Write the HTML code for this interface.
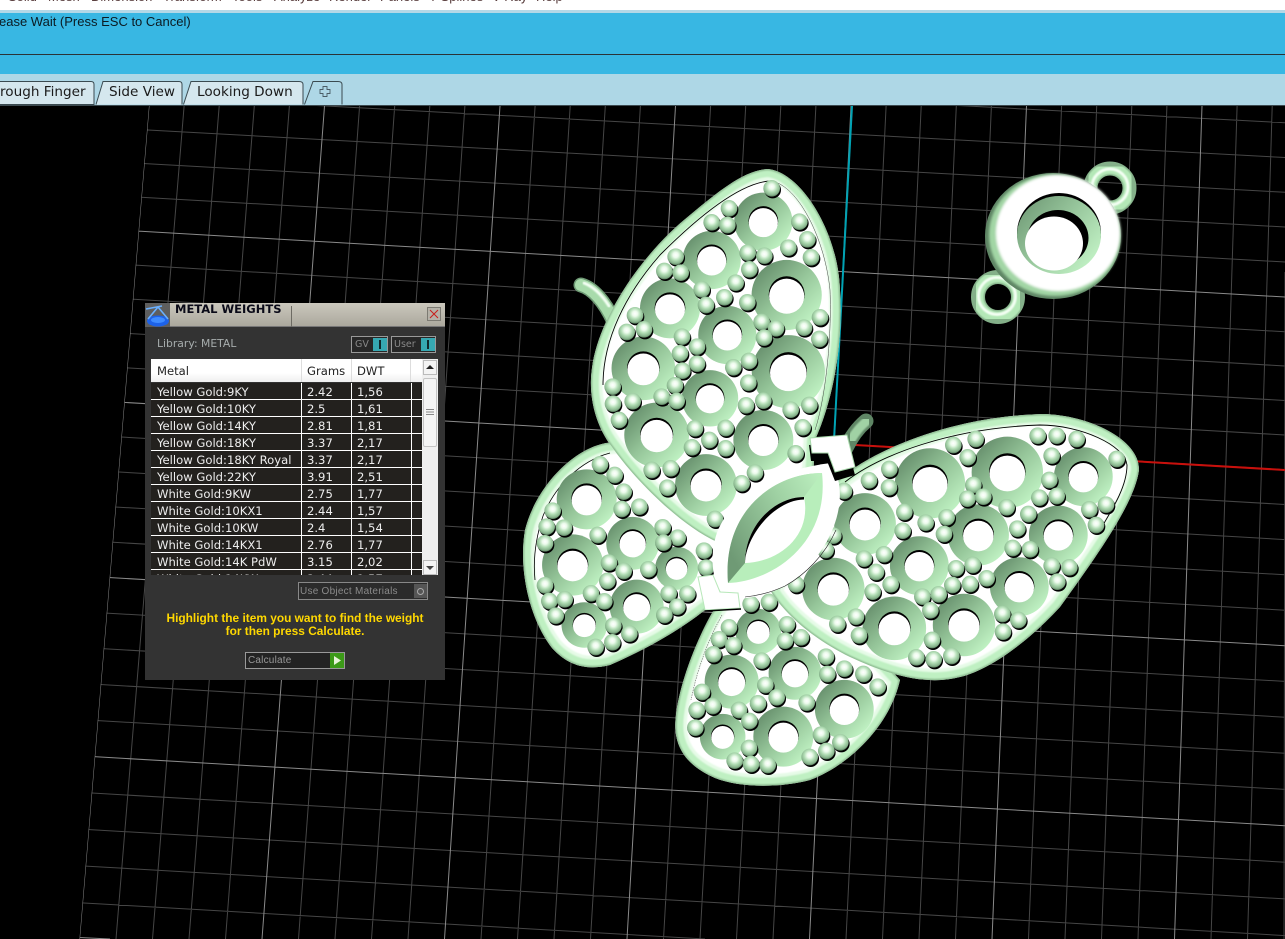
<!DOCTYPE html>
<html><head><meta charset="utf-8"><title>Metal Weights</title>
<style>
html,body{margin:0;padding:0;width:1285px;height:939px;overflow:hidden;background:#000}
#p{position:relative;width:1285px;height:939px;overflow:hidden;font-family:"Liberation Sans",sans-serif}
#p>div,#p>svg{position:absolute}
.a{position:absolute;white-space:nowrap}
.menu span{position:absolute;top:-11px;font:13px "Liberation Sans",sans-serif;color:#5a3f3f;white-space:nowrap}
.tt{position:absolute;top:82px;font:13.6px/21px "DejaVu Sans",sans-serif;color:#1a1a1a;white-space:nowrap}
#d{left:145px;top:303px;width:300px;height:377px;background:#333;overflow:hidden}
.f{font-family:"DejaVu Sans",sans-serif;font-size:11.6px;white-space:nowrap}
.r{position:absolute;left:6px;width:271px;height:16px;background:#23211e;border-bottom:1px solid #fff;color:#eee}
.r span{position:absolute;top:2px;line-height:15px}
</style></head><body><div id="p">

<svg width="1285" height="939" viewBox="0 0 1285 939" style="left:0;top:0">
<defs>
<clipPath id="gc"><polygon points="149,106 1285,106 1285,939 79.5,939"/></clipPath>
<filter id="fb" x="-5%" y="-5%" width="110%" height="110%"><feGaussianBlur stdDeviation=".7"/></filter>
<filter id="fc" x="-10%" y="-10%" width="120%" height="120%"><feGaussianBlur stdDeviation="1.2"/></filter>
<linearGradient id="rg" x1=".08" y1=".1" x2=".85" y2=".88"><stop offset="0" stop-color="#638b69"/><stop offset=".5" stop-color="#94c498"/><stop offset="1" stop-color="#c0f2c3"/></linearGradient>
<radialGradient id="bg" cx=".5" cy=".4" r=".6"><stop offset="0" stop-color="#fff"/><stop offset=".26" stop-color="#ecfbec"/><stop offset=".55" stop-color="#b0dcb3"/><stop offset=".85" stop-color="#86b28b"/><stop offset="1" stop-color="#55785a"/></radialGradient>
<linearGradient id="mg" x1="0" y1=".7" x2="1" y2="0"><stop offset="0" stop-color="#6f9a75"/><stop offset=".6" stop-color="#a0d2a4"/><stop offset="1" stop-color="#bdf0c0"/></linearGradient>
<linearGradient id="wall" x1="0" y1="0" x2="1" y2=".8"><stop offset="0" stop-color="#6a9370"/><stop offset=".5" stop-color="#97c69c"/><stop offset="1" stop-color="#c4f4c7"/></linearGradient>
<g id="b"><circle cx="3" cy="5" r="25" fill="#000"/><circle r="25" fill="url(#bg)"/></g>
<g id="o"><circle r="90" fill="url(#rg)"/><circle cy="-2" r="46" fill="#000"/><circle cy="3" r="45" fill="#fff"/></g>
<path id="w1" d="M768 169C800 172 838 230 840 290C843 340 835 395 815 440L812 500L740 560L717 542C680 525 635 480 612 447C595 425 588 395 592 368C598 320 640 255 690 215C720 190 745 170 768 169Z"/>
<path id="w2" d="M606 443C570 450 535 490 525 530C518 570 530 620 552 648C570 668 590 670 610 665C645 650 680 630 705 610L735 590L740 550L640 440Z"/>
<path id="w3" d="M720 600C700 630 680 680 676 715C672 745 685 765 715 778C740 788 780 788 810 780C850 765 890 725 900 680L800 570L735 575Z"/>
<path id="w4" d="M838 480C880 445 960 416 1043 414C1090 415 1140 440 1139 470C1135 500 1105 545 1060 607C1030 640 990 670 960 677C930 685 895 678 850 657C815 640 785 615 770 590Z"/>
<clipPath id="c1"><use href="#w1"/></clipPath>
<clipPath id="c2"><use href="#w2"/></clipPath>
<clipPath id="c3"><use href="#w3"/></clipPath>
<clipPath id="c4"><use href="#w4"/></clipPath>
</defs>

<rect x="0" y="106" width="1285" height="833" fill="#000"/>
<g clip-path="url(#gc)" fill="none">
<path stroke="#464646" stroke-width="1" d="M184.1 106L116 939M219.2 106L152.5 939M254.3 106L189 939M289.4 106L225.5 939M359.6 106L298.5 939M394.7 106L335 939M429.8 106L371.5 939M464.9 106L408 939M535.1 106L481 939M570.2 106L517.5 939M605.3 106L554 939M640.4 106L590.5 939M710.6 106L663.5 939M745.7 106L700 939M780.8 106L736.5 939M815.9 106L773 939M886.1 106L846 939M921.2 106L882.5 939M956.3 106L919 939M991.4 106L955.5 939M1061.6 106L1028.5 939M1096.7 106L1065 939M1131.8 106L1101.5 939M1166.9 106L1138 939M1237.1 106L1211 939M1272.2 106L1247.5 939M1285 272L1284 939
M0 55.2L1285 122.7M0 88.5L1285 157.5M0 121.9L1285 192.3M0 155.5L1285 227M0 189.3L1285 262M0 257.3L1285 331.8M0 291.5L1285 366M0 326L1285 400.5M0 360.5L1285 435M0 430L1285 504.5M0 465.1L1285 539.6M0 500.3L1285 574.8M0 535.7L1285 610.2M0 606.9L1285 681.4M0 642.7L1285 717.2M0 678.7L1285 753.2M0 714.9L1285 789.4M0 787.7L1285 862.2M0 824.4L1285 898.9M0 861.1L1285 935.6M0 898.1L705 939"/>
<path stroke="#8a8a8a" stroke-width="1" d="M149 106L79.5 939M324.5 106L262 939M500 106L444.5 939M675.5 106L627 939M851 106L809.5 939M1026.5 106L992 939M1202 106L1174.5 939M0 223.2L1285 297M0 395.2L1285 469.7M0 571.2L1285 645.7M0 751.2L1285 825.7M79 937.5L110 939"/>
</g>
<path d="M852 106L834 440" stroke="#00a3b4" stroke-width="2" fill="none"/>
<path d="M855 445L1285 470" stroke="#c8100c" stroke-width="2" fill="none"/>

<!-- jump rings behind wings -->
<g fill="none" stroke-linecap="round">
<path d="M581 285C592 288 604 300 614 322" stroke="#6f9a75" stroke-width="15"/>
<path d="M581 285C592 288 604 300 614 322" stroke="#a8dbab" stroke-width="12"/>
<path d="M584 283C594 287 602 295 609 306" stroke="#f4fff4" stroke-width="3" filter="url(#fb)"/>
<path d="M866 421C859 427 852 435 846 448" stroke="#5f8665" stroke-width="15"/>
<path d="M868 420C861 426 856 431 851 440" stroke="#a0d2a4" stroke-width="9" filter="url(#fb)"/>
</g>

<!-- lower-left wing -->
<use href="#w2" fill="#fff"/>
<g clip-path="url(#c2)"><g fill="none" filter="url(#fb)"><use href="#w2" stroke="#e6fbe7" stroke-width="23"/><use href="#w2" stroke="#bff0c2" stroke-width="16"/><use href="#w2" stroke="#8fbe93" stroke-width="3"/></g></g>
<path d="M610 453C580 461 555 486 543 516C535 540 533 560 535 580" fill="none" stroke="#000" stroke-width=".8"/>
<!-- bottom wing -->
<use href="#w3" fill="#fff"/>
<g clip-path="url(#c3)"><g fill="none" filter="url(#fb)"><use href="#w3" stroke="#e6fbe7" stroke-width="23"/><use href="#w3" stroke="#bff0c2" stroke-width="16"/><use href="#w3" stroke="#8fbe93" stroke-width="3"/></g></g>
<path d="M722 615C708 640 697 670 691 700" fill="none" stroke="#666" stroke-width=".6" stroke-dasharray="1.5 1"/>

<g transform="translate(520 440) scale(.33333)">
<use href="#o" transform="translate(200 178) scale(1)"/><use href="#o" transform="translate(338 310) scale(.88)"/><use href="#o" transform="translate(158 375) scale(1.02)"/><use href="#o" transform="translate(470 385) scale(.72)"/><use href="#o" transform="translate(350 500) scale(.9)"/><use href="#o" transform="translate(193 555) scale(.76)"/>
<use href="#o" transform="translate(715 575) scale(.76)"/><use href="#o" transform="translate(635 725) scale(.9)"/><use href="#o" transform="translate(825 700) scale(.88)"/><use href="#o" transform="translate(973 808) scale(.98)"/><use href="#o" transform="translate(790 890) scale(1)"/><use href="#o" transform="translate(608 890) scale(.76)"/>
<use href="#b" x="240" y="73"/><use href="#b" x="284" y="105"/><use href="#b" x="311" y="155"/><use href="#b" x="305" y="207"/><use href="#b" x="358" y="200"/><use href="#b" x="98" y="212"/><use href="#b" x="80" y="260"/><use href="#b" x="132" y="263"/><use href="#b" x="75" y="310"/><use href="#b" x="233" y="285"/><use href="#b" x="428" y="262"/><use href="#b" x="473" y="293"/><use href="#b" x="430" y="308"/><use href="#b" x="552" y="332"/><use href="#b" x="558" y="383"/><use href="#b" x="267" y="368"/><use href="#b" x="311" y="393"/><use href="#b" x="385" y="388"/><use href="#b" x="262" y="423"/><use href="#b" x="75" y="436"/><use href="#b" x="88" y="483"/><use href="#b" x="134" y="478"/><use href="#b" x="213" y="460"/><use href="#b" x="253" y="484"/><use href="#b" x="446" y="460"/><use href="#b" x="502" y="461"/><use href="#b" x="472" y="500"/><use href="#b" x="433" y="525"/><use href="#b" x="107" y="527"/><use href="#b" x="280" y="557"/><use href="#b" x="328" y="581"/><use href="#b" x="277" y="607"/><use href="#b" x="227" y="621"/>
<use href="#b" x="692" y="492"/><use href="#b" x="747" y="486"/><use href="#b" x="627" y="562"/><use href="#b" x="597" y="598"/><use href="#b" x="640" y="616"/><use href="#b" x="801" y="553"/><use href="#b" x="795" y="602"/><use href="#b" x="843" y="592"/><use href="#b" x="580" y="643"/><use href="#b" x="725" y="662"/><use href="#b" x="918" y="650"/><use href="#b" x="922" y="702"/><use href="#b" x="973" y="686"/><use href="#b" x="1030" y="702"/><use href="#b" x="1073" y="740"/><use href="#b" x="736" y="735"/><use href="#b" x="770" y="772"/><use href="#b" x="714" y="790"/><use href="#b" x="860" y="788"/><use href="#b" x="546" y="756"/><use href="#b" x="530" y="810"/><use href="#b" x="578" y="798"/><use href="#b" x="657" y="810"/><use href="#b" x="688" y="843"/><use href="#b" x="526" y="863"/><use href="#b" x="903" y="884"/><use href="#b" x="961" y="907"/><use href="#b" x="919" y="933"/><use href="#b" x="869" y="951"/><use href="#b" x="687" y="924"/><use href="#b" x="644" y="962"/><use href="#b" x="693" y="972"/><use href="#b" x="743" y="975"/>
</g>

<!-- right wing -->
<use href="#w4" fill="#fff"/>
<g clip-path="url(#c4)"><g fill="none" filter="url(#fb)"><use href="#w4" stroke="#e6fbe7" stroke-width="23"/><use href="#w4" stroke="#bff0c2" stroke-width="16"/><use href="#w4" stroke="#8fbe93" stroke-width="3"/></g></g>
<path d="M845 482C880 455 950 428 1040 425C1080 425 1125 445 1127 465C1127 485 1115 505 1100 530" fill="none" stroke="#000" stroke-width=".9"/>
<g transform="translate(760 400) scale(.33333)">
<use href="#o" transform="translate(315 372) scale(1.03)"/><use href="#o" transform="translate(510 250) scale(1.17)"/><use href="#o" transform="translate(742 217) scale(1.19)"/><use href="#o" transform="translate(970 230) scale(.98)"/><use href="#o" transform="translate(655 405) scale(1.02)"/><use href="#o" transform="translate(895 405) scale(.98)"/><use href="#o" transform="translate(478 497) scale(.98)"/><use href="#o" transform="translate(778 560) scale(.98)"/><use href="#o" transform="translate(220 567) scale(1.04)"/><use href="#o" transform="translate(403 685) scale(1.06)"/><use href="#o" transform="translate(612 675) scale(1.04)"/>
<use href="#b" x="580" y="135"/><use href="#b" x="647" y="117"/><use href="#b" x="623" y="172"/><use href="#b" x="833" y="107"/><use href="#b" x="890" y="107"/><use href="#b" x="950" y="117"/><use href="#b" x="875" y="167"/><use href="#b" x="1070" y="177"/><use href="#b" x="388" y="207"/><use href="#b" x="327" y="241"/><use href="#b" x="387" y="262"/><use href="#b" x="252" y="273"/><use href="#b" x="640" y="255"/><use href="#b" x="622" y="296"/><use href="#b" x="670" y="290"/><use href="#b" x="868" y="240"/><use href="#b" x="838" y="293"/><use href="#b" x="890" y="288"/><use href="#b" x="740" y="322"/><use href="#b" x="805" y="342"/><use href="#b" x="988" y="328"/><use href="#b" x="1038" y="314"/><use href="#b" x="1008" y="375"/><use href="#b" x="433" y="336"/><use href="#b" x="428" y="392"/><use href="#b" x="497" y="368"/><use href="#b" x="560" y="352"/><use href="#b" x="552" y="402"/><use href="#b" x="772" y="386"/><use href="#b" x="220" y="407"/><use href="#b" x="197" y="450"/><use href="#b" x="758" y="444"/><use href="#b" x="810" y="448"/><use href="#b" x="312" y="476"/><use href="#b" x="372" y="463"/><use href="#b" x="348" y="516"/><use href="#b" x="392" y="553"/><use href="#b" x="338" y="575"/><use href="#b" x="108" y="553"/><use href="#b" x="588" y="505"/><use href="#b" x="638" y="495"/><use href="#b" x="680" y="535"/><use href="#b" x="630" y="552"/><use href="#b" x="577" y="555"/><use href="#b" x="875" y="497"/><use href="#b" x="928" y="502"/><use href="#b" x="892" y="545"/><use href="#b" x="487" y="590"/><use href="#b" x="536" y="583"/><use href="#b" x="511" y="631"/><use href="#b" x="727" y="642"/><use href="#b" x="775" y="660"/><use href="#b" x="729" y="695"/><use href="#b" x="232" y="672"/><use href="#b" x="288" y="650"/><use href="#b" x="297" y="706"/><use href="#b" x="516" y="720"/><use href="#b" x="469" y="772"/><use href="#b" x="521" y="778"/><use href="#b" x="574" y="768"/>
</g>

<!-- top wing -->
<use href="#w1" fill="#fff"/>
<g clip-path="url(#c1)"><g fill="none" filter="url(#fb)"><use href="#w1" stroke="#e6fbe7" stroke-width="23"/><use href="#w1" stroke="#bff0c2" stroke-width="16"/><use href="#w1" stroke="#8fbe93" stroke-width="3"/></g></g>
<path d="M770 181C740 183 700 215 660 255C625 295 603 340 603 385" fill="none" stroke="#000" stroke-width=".9"/>
<path d="M775 182C800 190 825 240 830 290C832 340 825 400 815 430" fill="none" stroke="#444" stroke-width=".5"/>
<g transform="translate(520 160) scale(.33333)">
<use href="#o" transform="translate(730 185) scale(.97)"/><use href="#o" transform="translate(575 300) scale(.97)"/><use href="#o" transform="translate(800 405) scale(1.17)"/><use href="#o" transform="translate(450 445) scale(1)"/><use href="#o" transform="translate(622 525) scale(.97)"/><use href="#o" transform="translate(370 625) scale(1.06)"/><use href="#o" transform="translate(805 635) scale(1.22)"/><use href="#o" transform="translate(570 715) scale(.94)"/><use href="#o" transform="translate(410 825) scale(1.08)"/><use href="#o" transform="translate(730 840) scale(1)"/><use href="#o" transform="translate(558 975) scale(1.03)"/>
<use href="#b" x="755" y="85"/><use href="#b" x="627" y="145"/><use href="#b" x="575" y="187"/><use href="#b" x="622" y="195"/><use href="#b" x="838" y="185"/><use href="#b" x="862" y="238"/><use href="#b" x="805" y="263"/><use href="#b" x="873" y="292"/><use href="#b" x="683" y="278"/><use href="#b" x="733" y="287"/><use href="#b" x="688" y="328"/><use href="#b" x="467" y="290"/><use href="#b" x="433" y="333"/><use href="#b" x="482" y="338"/><use href="#b" x="647" y="368"/><use href="#b" x="545" y="388"/><use href="#b" x="613" y="412"/><use href="#b" x="558" y="435"/><use href="#b" x="682" y="427"/><use href="#b" x="345" y="466"/><use href="#b" x="320" y="516"/><use href="#b" x="372" y="508"/><use href="#b" x="725" y="486"/><use href="#b" x="768" y="505"/><use href="#b" x="732" y="533"/><use href="#b" x="852" y="503"/><use href="#b" x="900" y="472"/><use href="#b" x="898" y="537"/><use href="#b" x="486" y="530"/><use href="#b" x="531" y="560"/><use href="#b" x="480" y="580"/><use href="#b" x="531" y="611"/><use href="#b" x="487" y="632"/><use href="#b" x="640" y="622"/><use href="#b" x="687" y="603"/><use href="#b" x="685" y="668"/><use href="#b" x="278" y="680"/><use href="#b" x="465" y="676"/><use href="#b" x="425" y="710"/><use href="#b" x="470" y="723"/><use href="#b" x="279" y="731"/><use href="#b" x="338" y="724"/><use href="#b" x="297" y="780"/><use href="#b" x="678" y="736"/><use href="#b" x="730" y="722"/><use href="#b" x="812" y="749"/><use href="#b" x="868" y="735"/><use href="#b" x="848" y="802"/><use href="#b" x="525" y="805"/><use href="#b" x="617" y="804"/><use href="#b" x="568" y="840"/><use href="#b" x="516" y="862"/><use href="#b" x="617" y="865"/><use href="#b" x="827" y="880"/><use href="#b" x="395" y="930"/><use href="#b" x="452" y="925"/><use href="#b" x="442" y="983"/><use href="#b" x="705" y="938"/><use href="#b" x="665" y="970"/><use href="#b" x="585" y="1077"/>
</g>

<!-- centre marquise -->
<path d="M832 463C852 500 832 550 792 582C772 595 742 601 728 598C712 590 708 555 718 530C733 495 780 468 832 463Z" fill="#fff"/>
<path d="M836 530C825 555 805 575 785 586C770 593 755 596 745 597" fill="none" stroke="#222" stroke-width=".6"/>
<path d="M822 473C775 473 722 510 728 583C770 582 830 545 822 473Z" fill="#b8eebb"/>
<path d="M822 473C775 473 722 510 728 583L745 563C745 530 770 498 804 497Z" fill="url(#mg)"/>
<path d="M804 497C775 497 745 525 745 563C780 562 812 535 804 497Z" fill="#fff"/>
<path d="M804 497C775 497 745 525 745 563C746 535 775 500 804 499.500Z" fill="#000"/>

<!-- prongs -->
<path d="M810 441L847 438L856 471L836 477L828 457L812 457Z" fill="#000" transform="translate(-1 4)"/>
<path d="M810 438L847 435L855 467L835 472L828 453L812 453Z" fill="#fff" stroke="#a8d8ab" stroke-width="1"/>
<path d="M698 577L713 575L720 592L738 593L740 608L705 610Z" fill="#fff" stroke="#b8e8ba" stroke-width="1"/>
<path d="M705 611L741 609" stroke="#000" stroke-width="1.500" fill="none"/>

<!-- connector -->
<g fill="none">
<circle cx="1110" cy="188" r="19.500" stroke="#84b089" stroke-width="14"/><circle cx="1110" cy="188" r="19.500" stroke="#b4e8b7" stroke-width="11" filter="url(#fb)"/><circle cx="1110" cy="187" r="18" stroke="#f4fff4" stroke-width="3" filter="url(#fb)"/>
<circle cx="998" cy="297" r="20" stroke="#84b089" stroke-width="14"/><circle cx="998" cy="297" r="20" stroke="#b4e8b7" stroke-width="11" filter="url(#fb)"/><circle cx="997" cy="296" r="18.500" stroke="#f4fff4" stroke-width="3" filter="url(#fb)"/>
</g>
<ellipse cx="1053" cy="236" rx="68" ry="63" fill="#5f8665"/>
<g filter="url(#fc)">
<ellipse cx="1055" cy="235" rx="66" ry="61" fill="#a2d6a5"/>
<ellipse cx="1058" cy="233" rx="62" ry="58" fill="#fff"/>
</g>
<ellipse cx="1059" cy="233" rx="42" ry="40" fill="#000"/>
<ellipse cx="1059" cy="235" rx="42" ry="39" fill="url(#wall)"/>
<ellipse cx="1058" cy="238" rx="30.500" ry="28" fill="#000"/>
<ellipse cx="1054" cy="243.500" rx="29" ry="27" fill="#fff"/>
</svg>

<!-- top chrome -->
<div style="left:0;top:0;width:1285px;height:10px;background:#fff" class="menu"><span style="left:8px">Solid</span><span style="left:48px">Mesh</span><span style="left:91px">Dimension</span><span style="left:163px">Transform</span><span style="left:232px">Tools</span><span style="left:274px">Analyze</span><span style="left:329px">Render</span><span style="left:380px">Panels</span><span style="left:429px">T-Splines</span><span style="left:492px">V-Ray</span><span style="left:536px">Help</span></div>
<div style="left:0;top:10px;width:1285px;height:3px;background:#b4d8e7"></div>
<div style="left:0;top:13px;width:1285px;height:61px;background:#38b7e3"></div>
<div style="left:0;top:54px;width:1285px;height:1px;background:#2b3236"></div>
<div class="a" style="left:-1px;top:14px;font:13px/16px 'Liberation Sans',sans-serif;color:#0b1a22">ease Wait (Press ESC to Cancel)</div>
<div style="left:0;top:74px;width:1285px;height:31px;background:#aed7e6"></div>
<div style="left:0;top:105px;width:1285px;height:1px;background:#3c4a50"></div>
<svg width="350" height="26" style="left:0;top:80px" viewBox="0 80 350 26">
<path d="M-2 81.500H91Q94 81.500 94 84.500V104.500H-2Z" fill="#d5e7ee" stroke="#3a4a50"/>
<path d="M96 104.500L103 81.500H179Q182 81.500 182 84.500V104.500" fill="#d5e7ee" stroke="#3a4a50"/>
<path d="M183.500 104.500L191 81.500H299Q303 81.500 303 84.500V104.500" fill="#d5e7ee" stroke="#3a4a50"/>
<path d="M304.500 104.500L313 81.500H338Q342 81.500 342 84.500V104.500" fill="#aed7e6" stroke="#3a4a50"/>
<path d="M323 86.500h4v3h3v4h-3v3h-4v-3h-3v-4h3z" fill="none" stroke="#4a5c66" stroke-width=".9"/>
</svg>
<span class="tt" style="left:0;position:absolute">rough Finger</span>
<span class="tt" style="left:109px;position:absolute">Side View</span>
<span class="tt" style="left:197px;position:absolute">Looking Down</span>

<!-- dialog -->
<div id="d">
<div class="a" style="left:0;top:0;width:300px;height:24px;background:linear-gradient(#cbc8bd,#aba89d);border-bottom:1px solid #777;box-sizing:border-box"></div>
<div class="a" style="left:0;top:0;width:25px;height:24px;background:#5e5e5e"></div>
<svg class="a" style="left:0;top:0" width="26" height="25"><ellipse cx="13" cy="18" rx="11" ry="5.500" fill="#1d62e8"/><ellipse cx="13" cy="17" rx="7" ry="3" fill="#3f8cff"/><path d="M1 6L17 3M13 4L3 16M13 4L23 16" stroke="#6ab0ff" stroke-width="1.600" fill="none"/></svg>
<div class="a" style="left:30px;top:0;font:bold 11.5px/13px 'DejaVu Sans',sans-serif;color:#0a0a18">METAL WEIGHTS</div>
<div class="a" style="left:146px;top:3px;width:1px;height:21px;background:#6d6b63"></div>
<div class="a" style="left:282px;top:4px;width:14px;height:14px;background:#b5b2a8;border:1px solid #7c7a72;box-sizing:border-box"></div>
<svg class="a" style="left:282px;top:4px" width="14" height="14"><path d="M3 3L11 11M11 3L3 11" stroke="#c8201c" stroke-width="1" fill="none"/></svg>

<div class="a f" style="left:12px;top:34px;font-size:10.800px;line-height:13px;color:#a7adad">Library: METAL</div>
<div class="a" style="left:206px;top:33px;width:37px;height:17px;border:1px solid #999;box-sizing:border-box;background:#272727"><span class="a f" style="left:3px;top:2px;font-size:9.500px;color:#888">GV</span><span class="a" style="left:21px;top:1px;width:14px;height:13px;background:#36a8b2"></span><span class="a" style="left:27px;top:3px;width:2px;height:9px;background:#10282c"></span></div>
<div class="a" style="left:246px;top:33px;width:45px;height:17px;border:1px solid #999;box-sizing:border-box;background:#272727"><span class="a f" style="left:2px;top:2px;font-size:9.500px;color:#888">User</span><span class="a" style="left:29px;top:1px;width:14px;height:13px;background:#36a8b2"></span><span class="a" style="left:35px;top:3px;width:2px;height:9px;background:#10282c"></span></div>

<!-- table -->
<div class="a" style="left:0;top:56px;width:300px;height:216px;overflow:hidden">
<div class="a" style="left:6px;top:0;width:287px;height:23px;background:linear-gradient(#fff 60%,#efefef)"></div>
<div class="a f" style="left:12px;top:5px;line-height:14px;color:#222">Metal</div>
<div class="a f" style="left:162px;top:5px;line-height:14px;color:#222">Grams</div>
<div class="a f" style="left:212px;top:5px;line-height:14px;color:#222">DWT</div>
<div class="a" style="left:156px;top:0;width:1px;height:23px;background:#ddd"></div>
<div class="a" style="left:206px;top:0;width:1px;height:23px;background:#ddd"></div>
<div class="a" style="left:265px;top:0;width:1px;height:23px;background:#ddd"></div>

<div class="r f" style="top:24px"><span style="left:6px">Yellow Gold:9KY</span><span style="left:156px">2.42</span><span style="left:206px">1,56</span></div>
<div class="r f" style="top:41px"><span style="left:6px">Yellow Gold:10KY</span><span style="left:156px">2.5</span><span style="left:206px">1,61</span></div>
<div class="r f" style="top:58px"><span style="left:6px">Yellow Gold:14KY</span><span style="left:156px">2.81</span><span style="left:206px">1,81</span></div>
<div class="r f" style="top:75px"><span style="left:6px">Yellow Gold:18KY</span><span style="left:156px">3.37</span><span style="left:206px">2,17</span></div>
<div class="r f" style="top:92px"><span style="left:6px">Yellow Gold:18KY Royal</span><span style="left:156px">3.37</span><span style="left:206px">2,17</span></div>
<div class="r f" style="top:109px"><span style="left:6px">Yellow Gold:22KY</span><span style="left:156px">3.91</span><span style="left:206px">2,51</span></div>
<div class="r f" style="top:126px"><span style="left:6px">White Gold:9KW</span><span style="left:156px">2.75</span><span style="left:206px">1,77</span></div>
<div class="r f" style="top:143px"><span style="left:6px">White Gold:10KX1</span><span style="left:156px">2.44</span><span style="left:206px">1,57</span></div>
<div class="r f" style="top:160px"><span style="left:6px">White Gold:10KW</span><span style="left:156px">2.4</span><span style="left:206px">1,54</span></div>
<div class="r f" style="top:177px"><span style="left:6px">White Gold:14KX1</span><span style="left:156px">2.76</span><span style="left:206px">1,77</span></div>
<div class="r f" style="top:194px"><span style="left:6px">White Gold:14K PdW</span><span style="left:156px">3.15</span><span style="left:206px">2,02</span></div>
<div class="r f" style="top:211px;height:5px;overflow:hidden;border-bottom:0"><span style="left:6px">White Gold:14KW</span><span style="left:156px">2.44</span><span style="left:206px">1,57</span></div>
<div class="a" style="left:156px;top:24px;width:1px;height:192px;background:#fff"></div>
<div class="a" style="left:206px;top:24px;width:1px;height:192px;background:#fff"></div>
<div class="a" style="left:265.500px;top:24px;width:1px;height:192px;background:#fff"></div>
<!-- scrollbar -->
<div class="a" style="left:277px;top:0;width:16px;height:216px;background:#efefef"></div>
<div class="a" style="left:278px;top:1px;width:14px;height:15px;background:#f4f4f4;border:1px solid #bbb;box-sizing:border-box"></div>
<svg class="a" style="left:278px;top:1px" width="14" height="15"><path d="M3 9L7 5L11 9Z" fill="#222"/></svg>
<div class="a" style="left:278px;top:19px;width:14px;height:69px;background:#f4f4f4;border:1px solid #c4c4c4;border-radius:2px;box-sizing:border-box"></div>
<svg class="a" style="left:279px;top:49px" width="12" height="9"><path d="M2 1.500H10M2 4H10M2 6.500H10" stroke="#888" fill="none"/></svg>
<div class="a" style="left:278px;top:201px;width:14px;height:15px;background:#f4f4f4;border:1px solid #bbb;box-sizing:border-box"></div>
<svg class="a" style="left:278px;top:201px" width="14" height="15"><path d="M3 6L7 10L11 6Z" fill="#444"/></svg>
</div>

<div class="a" style="left:153px;top:279px;width:130px;height:18px;border:1px solid #888;box-sizing:border-box;background:#2b2b2b"></div>
<div class="a" style="left:155px;top:282px;font:10px/13px 'Liberation Sans',sans-serif;letter-spacing:.25px;color:#8b8b8b">Use Object Materials</div>
<div class="a" style="left:269px;top:281px;width:13px;height:14px;background:#555"></div>
<div class="a" style="left:272px;top:285px;width:5px;height:5px;border:1px solid #aaa;border-radius:50%"></div>

<div class="a" style="left:0;top:309px;width:300px;text-align:center;font:bold 11.9px/13px 'Liberation Sans',sans-serif;color:#ffd800">Highlight the item you want to find the weight<br>for then press Calculate.</div>

<div class="a" style="left:100px;top:349px;width:100px;height:17px;border:1px solid #999;box-sizing:border-box;background:#232323"></div>
<div class="a" style="left:103px;top:351px;font:10px/14px 'Liberation Sans',sans-serif;letter-spacing:.2px;color:#999">Calculate</div>
<div class="a" style="left:185px;top:350px;width:14px;height:15px;background:#3c9a18"></div>
<svg class="a" style="left:185px;top:350px" width="14" height="15"><path d="M4 3L11 7.500L4 12Z" fill="#e8f4d8"/></svg>
</div>

</div></body></html>
